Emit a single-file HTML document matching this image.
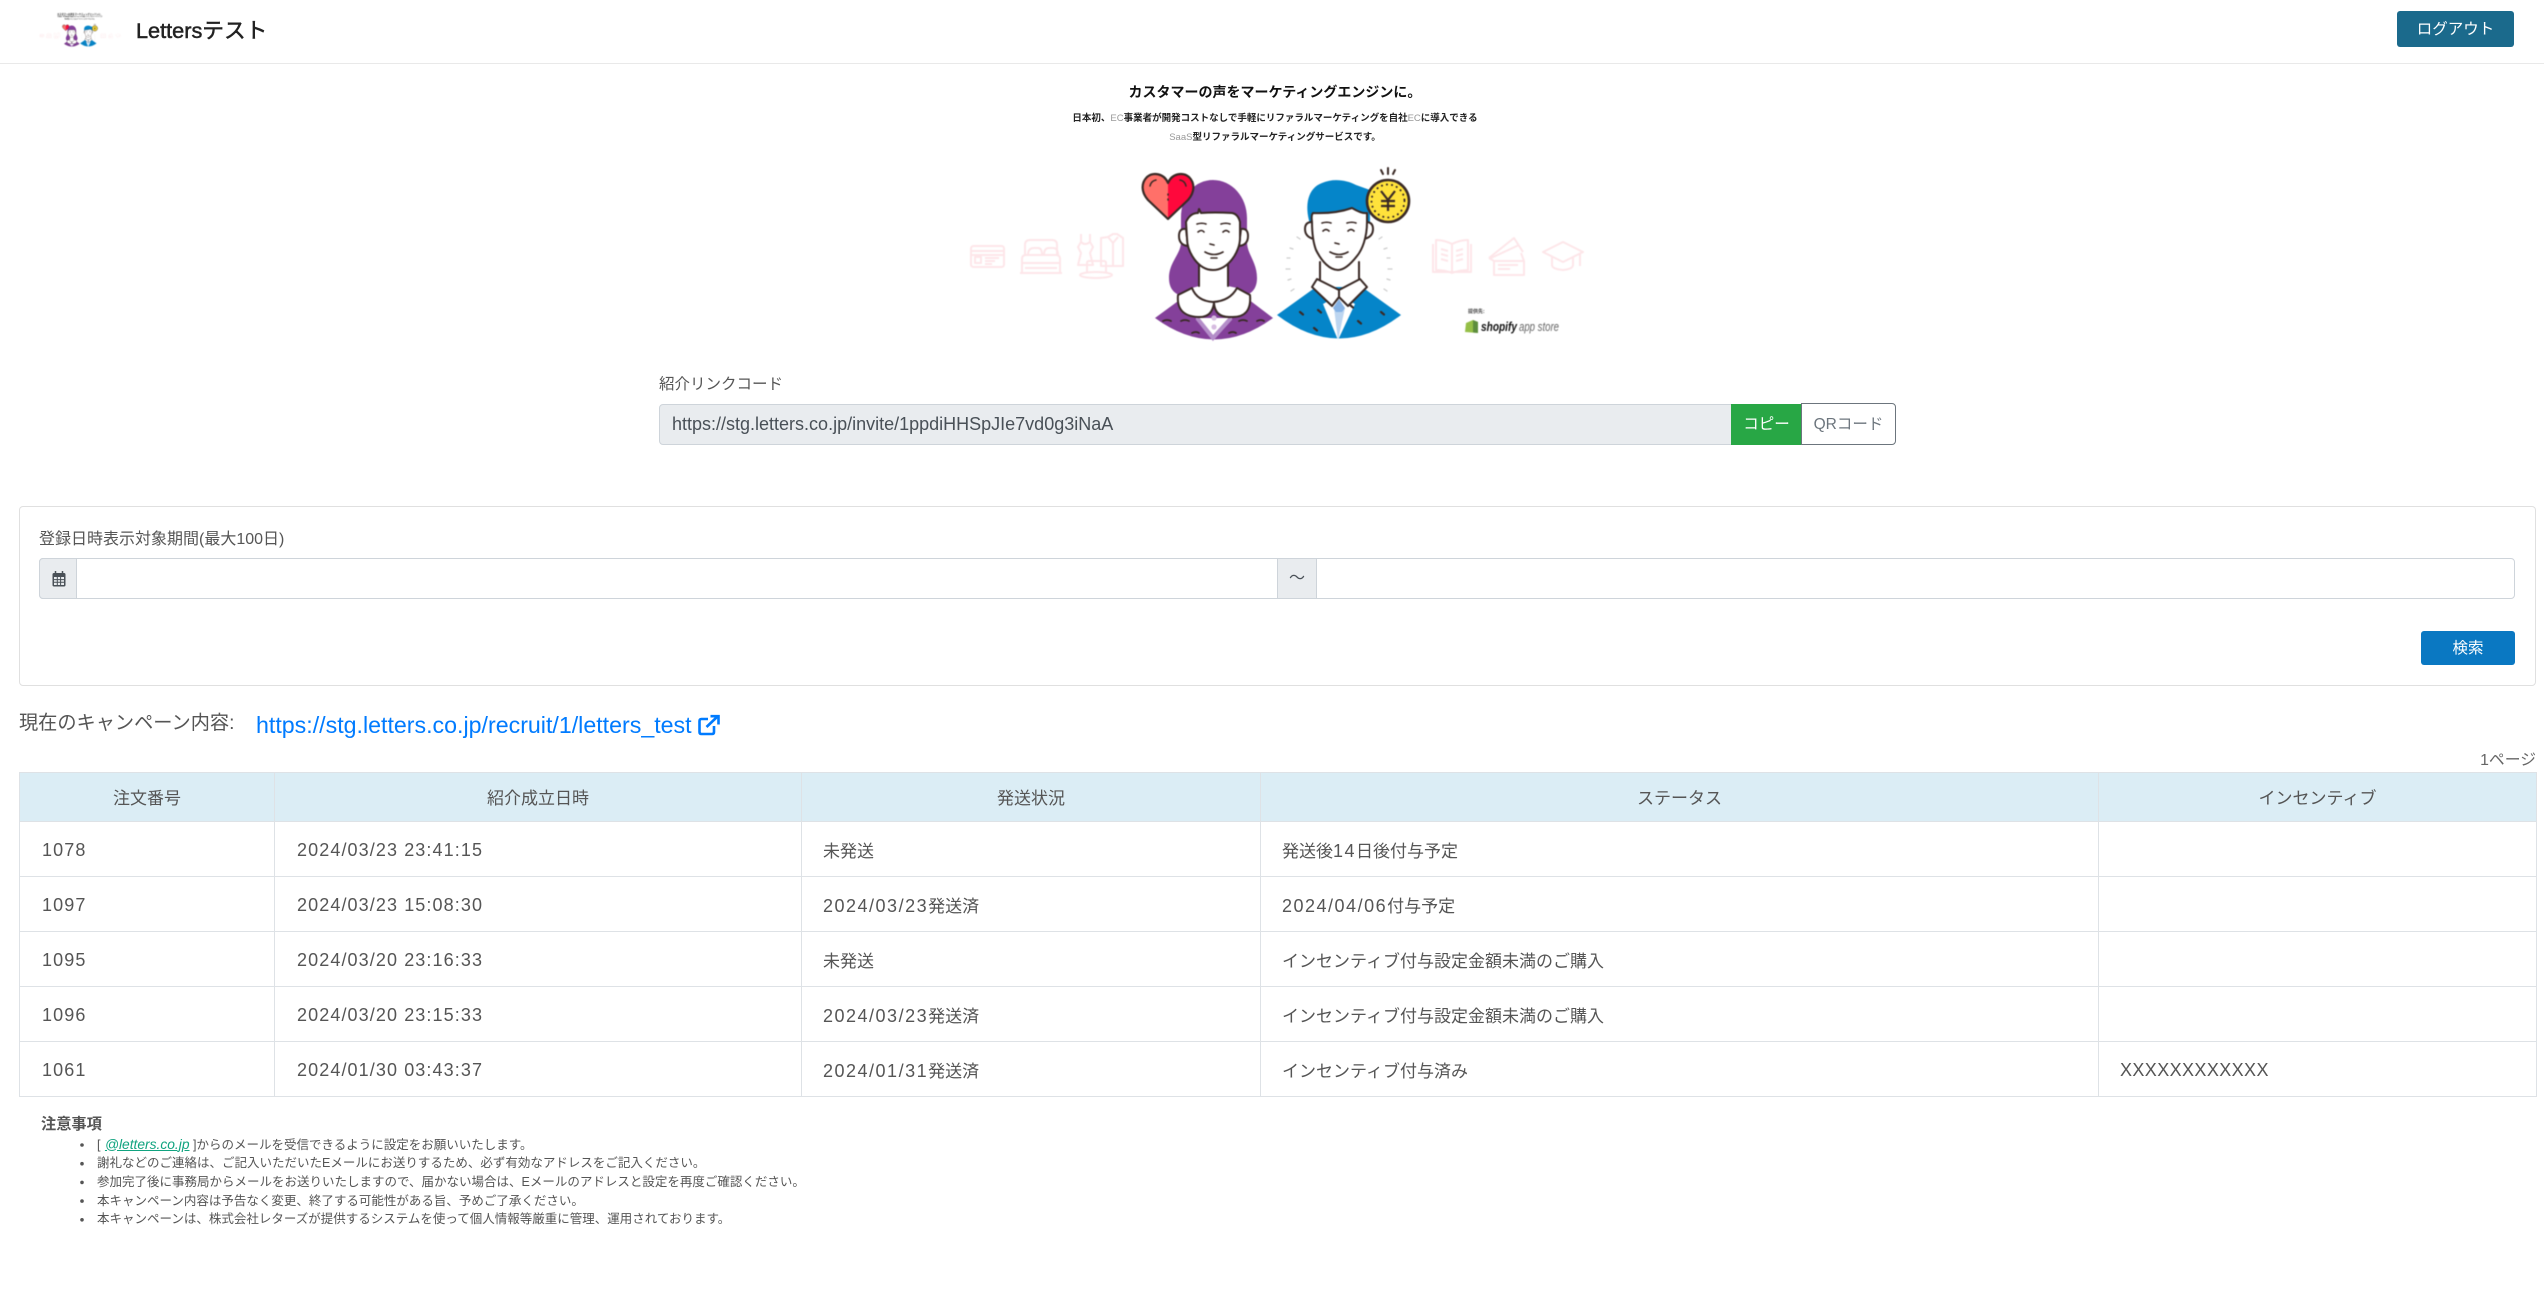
<!DOCTYPE html>
<html lang="ja"><head><meta charset="utf-8"><title>Lettersテスト</title>
<style>
*{box-sizing:border-box}
html,body{margin:0;padding:0;background:#fff}
body{width:2544px;height:1298px;position:relative;overflow:hidden;font-family:"Liberation Sans","Noto Sans CJK JP",sans-serif;color:#555}
.a{position:absolute;white-space:nowrap}
table{position:absolute;left:19px;top:772px;width:2517px;height:325px;border-collapse:collapse;table-layout:fixed;font-size:17px}
th,td{border:1px solid #dee2e6;padding:0 0 0 21px;color:#555;font-weight:400;text-align:left;white-space:nowrap}
th{background:#dbedf5;text-align:center;padding:0 0 2px;height:49px}
td{height:55px}
.d{font-size:18px;letter-spacing:1.1px;padding-top:2px;padding-left:22px}
.x{letter-spacing:.4px;padding-left:21px}
.e{font-size:18px;letter-spacing:1.5px}
ul{margin:0;padding:0;list-style:none}
</style></head><body>
<!-- header -->
<div class="a" style="left:0;top:63px;width:2544px;height:1px;background:#e9e9e9"></div>
<svg class="a" style="left:0;top:0;filter:blur(.4px)" width="140" height="60" viewBox="0 0 140 60">
<g transform="translate(80 13) scale(.1322) translate(-1276 -85)"><use href="#art"/></g>
<g font-size="2.2" fill="#222" text-anchor="middle" font-weight="700"><text x="80" y="15">カスタマーの声をマーケティングエンジンに。</text>
<text x="80" y="17" font-size="1.4">日本初、EC事業者が開発コストなしで手軽にリファラルマーケティング</text>
<text x="80" y="19.5" font-size="1.4">SaaS型リファラルマーケティングサービスです。</text></g>
</svg>
<div class="a" style="left:136px;top:17px;font-size:21.700px;line-height:28px;color:#222;-webkit-text-stroke:.5px #222">Lettersテスト</div>
<div class="a" style="left:2397px;top:11px;width:117px;height:36px;background:#1b6a8c;border-radius:3px;color:#fff;font-size:15.500px;line-height:38px;text-align:center">ログアウト</div>

<!-- hero -->
<div class="a" style="left:975px;width:600px;top:81px;text-align:center;font-size:14px;line-height:22px;font-weight:700;color:#111">カスタマーの声をマーケティングエンジンに。</div>
<div class="a" style="left:975px;width:600px;top:108.500px;text-align:center;font-size:9.500px;line-height:20px;font-weight:700;color:#222">日本初、<span style="color:#999;font-weight:400">EC</span>事業者が開発コストなしで手軽にリファラルマーケティングを自社<span style="color:#999;font-weight:400">EC</span>に導入できる</div>
<div class="a" style="left:975px;width:600px;top:127.500px;text-align:center;font-size:9.500px;line-height:20px;font-weight:700;color:#222"><span style="color:#999;font-weight:400">SaaS</span>型リファラルマーケティングサービスです。</div>

<svg class="a" style="left:0;top:0;filter:blur(.4px)" width="2544" height="400" viewBox="0 0 2544 400">
<defs><g id="art">
 <!-- pink icons -->
 <g fill="none" stroke="#fde6e9" stroke-width="2" stroke-linejoin="round">
  <rect x="971" y="246" width="33" height="21" rx="2.500"/><path d="M971 251h33M971 255h33"/><rect x="975" y="257" width="6" height="6"/><path d="M985 258h14M985 261h10M985 264h7"/>
  <path d="M1025 255v-10q0-5 5-5h22q5 0 5 5v10"/><path d="M1028 255q0-7 6-7h4q4 0 4 7M1044 255q0-7 5-7h4q5 0 5 7"/><path d="M1022 273v-14q0-4 4-4h30q4 0 4 4v14"/><path d="M1022 263h38M1020 273h42M1025 268h32"/>
  <path d="M1081 234v8l-3 5 3 6-3 12h15l-3-12 3-6-3-5v-8M1081 242q4 4 9 0"/>
  <path d="M1108 237l5-3h4l6 4v28h-22v-28zM1108 237l5 6 5-6M1113 243v23"/>
  <path d="M1087 272v-9q0-2 2-2h15q2 0 2 2v9"/><ellipse cx="1096" cy="275" rx="16" ry="3"/>
  <path d="M1452 244q-8-4-16-4v30q9 0 16 3 8-3 16-3v-30q-8 0-16 4zM1452 244v29M1433 244v28h38v-28"/><path d="M1441 249l7 2M1441 254l7 2M1441 259l7 2M1456 251l7-2M1456 256l7-2M1456 261l7-2"/>
  <rect x="1494" y="261" width="30" height="14"/><path d="M1489 258l5 3M1489 258l25-20 9 14M1491 258l28-13M1524 261l-3-8M1498 265h20M1498 269h12"/>
  <path d="M1543 252l20-10 20 10-20 10zM1552 257v8q0 4 11 5 10-1 10-5v-8M1580 254v12"/>
 </g>
 <!-- woman -->
 <path fill="#84409a" d="M1181 218C1181 195 1195 180 1213 180C1232 180 1247 197 1247 218V242C1247 254 1257 262 1257 278C1257 290 1250 296 1240 296H1186C1176 296 1169 290 1169 278C1169 262 1181 254 1181 242Z"/>
 <path fill="#84409a" d="M1155 318L1185 296H1244L1273 318Q1214 361 1155 318Z"/>
 <path fill="#fff" d="M1196 318L1214 339L1232 318Z"/><path fill="none" stroke="#b48dc9" stroke-width="4" d="M1197 318L1213 338L1231 318"/>
 <circle cx="1214" cy="318" r="2.600" fill="#d6bce0"/><circle cx="1214" cy="327" r="2.600" fill="#d6bce0"/>
 <g fill="none" stroke="#3a2a26" stroke-width="1.800" stroke-linecap="round">
  <path d="M1163 321q4-2 8 0M1181 321q4-2 8 0M1239 321q4-2 8 0M1257 321q4-2 7 0M1192 333q4-2 7 0M1229 333q4-2 7 0"/>
 </g>
 <g stroke="#3a2a26" stroke-width="2" fill="#fff" stroke-linejoin="round" stroke-linecap="round">
  <path d="M1186 229q-7-1-7 7 0 9 9 10z"/><path d="M1241 229q7-1 7 7 0 9-9 10z"/>
  <path d="M1199 258V286L1192 288Q1197 301 1213 302Q1230 301 1237 288L1228 286V258Z" stroke="none"/>
  <path d="M1199 262V286M1228 262V286" fill="none"/>
  <path d="M1186 222Q1190 213 1198 213L1199 209L1201 213Q1214 212 1232 213Q1238 214 1240 222V238C1240 252 1228 270 1213 270C1198 270 1187 252 1187 238Z"/>
  <path d="M1192 288Q1197 301 1213 302Q1230 301 1237 288L1250 295Q1252 318 1231 317Q1215 318 1214 303Q1212 318 1198 317Q1176 316 1178 295Z"/>
  <g fill="none" stroke-width="1.600">
   <path d="M1197 224q5-1.500 9 0M1221 224q5-1.500 9 0M1198 232q3.500-3 6 0M1223 232q3-3 6 0M1210 244l4 1M1205 252q9 5 18 0M1211 258h6"/>
  </g>
 </g>
 <!-- heart -->
 <path fill="#ff7069" d="M1168 219V183C1164 173 1152 172 1147 177C1141 183 1142 192 1147 199Z"/>
 <path fill="#ff083c" d="M1168 219V183C1172 173 1184 172 1189 177C1195 183 1194 192 1189 199Z"/>
 <path fill="none" stroke="#3a2a26" stroke-width="2.200" stroke-linejoin="round" d="M1168 219L1148 200C1141 192 1141 183 1147 177C1153 172 1164 173 1168 183C1172 173 1183 172 1189 177C1195 183 1195 192 1188 200Z"/>
 <path fill="none" stroke="#3a2a26" stroke-width="1.500" stroke-linecap="round" d="M1150 186q1-5 6-6M1186 186q-1-5-6-6M1168 194v1M1168 199v1"/>
 <!-- man -->
 <path fill="#0585c9" d="M1310 224C1304 205 1308 188 1322 183C1333 178 1347 180 1356 185L1370 190V224H1310Z"/>
 <path fill="#0585c9" d="M1277 315L1316 287H1362L1401 315Q1339 362 1277 315Z"/>
 <path fill="#fff" d="M1323 304L1338 340L1355 304L1339 295Z"/>
 <path fill="#bcd5f0" d="M1334 308L1338 340L1345 308Z"/><path fill="#86b3e6" d="M1333 308L1339 299L1345 308L1342 312H1336Z"/>
 <g stroke="#3a2a26" stroke-width="2" stroke-linecap="round" fill="#fff" stroke-linejoin="round">
  <path d="M1312 222q-7 0-7 7 0 8 9 10z"/><path d="M1366 222q7 0 7 7 0 8-9 10z"/>
  <path d="M1320 262V280H1359V262Z" stroke="none"/><path d="M1320 262V280M1359 262V280" fill="none"/>
  <path d="M1312 222Q1311 215 1313 213Q1335 214 1352 208Q1362 214 1367 213V222C1367 238 1362 250 1357 256C1350 265 1344 270 1338 270C1330 270 1322 262 1316 250C1313 242 1312 232 1312 222Z"/>
  <path d="M1317 279L1339 290L1360 279L1367 287L1348 306L1339 297L1332 306L1312 287Z"/>
  <path d="M1339 290V297" fill="none"/>
  <g fill="none" stroke-width="1.600"><path d="M1322 223q5-1.500 9 0M1347 223q5-1.500 9 0M1323 231q3-3 6 0M1348 231q3-3 6 0M1335 243l4 1M1330 252q9 5 18 0M1336 257h6"/></g>
  <path d="M1300 312l3 2.500M1318 310l3 2.500M1350 305l3 2.500M1381 312l3 2.500M1358 321l3 2.500M1314 328l3 2.500" fill="none" stroke-width="2.200"/>
 </g>
 <g fill="none" stroke="#ccc" stroke-width="1.200" stroke-linecap="round"><path d="M1297 237l3 2M1290 248l3 1M1287 258h3M1286 269h4M1288 280l3-1M1291 291l3-2M1382 237l-3 2M1387 248l-3 1M1390 258h-3M1392 269h-4M1390 280l-3-1M1387 291l-3-2"/></g>
 <circle cx="1388" cy="201" r="21" fill="#ffe23b" stroke="#3a2a26" stroke-width="2.600"/>
 <circle cx="1388" cy="201" r="16.500" fill="none" stroke="#3a2a26" stroke-width="2" stroke-dasharray=".1 5" stroke-linecap="round"/>
 <path fill="none" stroke="#3a2a26" stroke-width="2.200" d="M1381 191l7 9 7-9M1388 200v11M1381 201h14M1381 206h14"/>
 <path stroke="#3a2a26" stroke-width="2" stroke-linecap="round" d="M1381 170l2 4M1388 168v6M1395 170l-2 4"/>
</g></defs>
<use href="#art"/>
<!-- shopify -->
<path fill="#95bf47" d="M1466 323l7-3 5 2v11l-13-1z"/><path fill="#5e8e3e" d="M1473 320l5 2v11l-5-.5z"/>
<text x="1468" y="313" font-size="5" fill="#444" font-weight="700">提供先:</text>
<text x="1481" y="331" font-size="12.500" font-weight="700" font-style="italic" fill="#111" textLength="36" lengthAdjust="spacingAndGlyphs">shopify</text>
<text x="1519" y="331" font-size="12.500" font-style="italic" fill="#666" textLength="40" lengthAdjust="spacingAndGlyphs">app store</text>
</svg>

<!-- referral code -->
<div class="a" style="left:659px;top:373.500px;font-size:15.500px;line-height:22px">紹介リンクコード</div>
<div class="a" style="left:659px;top:404px;width:1073px;height:41px;background:#e9ecef;border:1px solid #ced4da;border-radius:4px 0 0 4px;font-size:18px;line-height:39px;padding-left:12px;color:#495057">https://stg.letters.co.jp/invite/1ppdiHHSpJIe7vd0g3iNaA</div>
<div class="a" style="left:1731px;top:404px;width:71px;height:41px;background:#28a745;color:#fff;font-size:15.500px;line-height:41px;text-align:center">コピー</div>
<div class="a" style="left:1801px;top:403px;width:95px;height:42px;border:1px solid #6c757d;border-radius:0 4px 4px 0;color:#6c757d;font-size:15.500px;line-height:42px;text-align:center">QRコード</div>

<!-- search card -->
<div class="a" style="left:19px;top:506px;width:2517px;height:180px;border:1px solid #e0e0e0;border-radius:4px"></div>
<div class="a" style="left:39px;top:528.500px;font-size:16px;line-height:22px">登録日時表示対象期間(最大100日)</div>
<div class="a" style="left:39px;top:558px;width:2476px;height:41px;border:1px solid #ced4da;border-radius:4px"></div>
<div class="a" style="left:39px;top:558px;width:38px;height:41px;background:#e9ecef;border:1px solid #ced4da;border-radius:4px 0 0 4px"></div>
<svg class="a" style="left:52px;top:571px" width="14" height="16" viewBox="0 0 14 16"><rect x=".5" y="2" width="13" height="13.500" rx="1.500" fill="#495057"/><rect x="2" y="6" width="10" height="8" fill="#e9ecef"/><path d="M5.300 6v8M8.600 6v8M2 8.600h10M2 11.300h10" stroke="#495057" stroke-width="1"/><path d="M3.500 0v3M10.500 0v3" stroke="#495057" stroke-width="1.500"/></svg>
<div class="a" style="left:1277px;top:558px;width:40px;height:41px;background:#e9ecef;border:1px solid #ced4da;font-size:16px;line-height:39px;text-align:center;color:#495057">〜</div>
<div class="a" style="left:2421px;top:631px;width:94px;height:34px;background:#0a78c2;border-radius:3px;color:#fff;font-size:15.500px;line-height:36px;text-align:center">検索</div>

<!-- campaign -->
<div class="a" style="left:19px;top:710px;font-size:19.200px;line-height:28px">現在のキャンペーン内容:</div>
<div class="a" style="left:256px;top:711px;font-size:23.200px;line-height:28px;color:#007bff">https://stg.letters.co.jp/recruit/1/letters_test</div>
<svg class="a" style="left:697px;top:714px" width="24" height="22" viewBox="0 0 24 22" fill="none" stroke="#007bff" stroke-width="2.600"><path d="M11 5H4.500Q2.500 5 2.500 7V18Q2.500 20 4.500 20H15Q17 20 17 18V12"/><path d="M9.500 13L20 3" /><path d="M13.500 2.200H21.500V10.500" /></svg>
<div class="a" style="right:8px;top:749.500px;font-size:15.800px;line-height:22px;color:#666">1ページ</div>

<table>
<colgroup><col style="width:255px"><col style="width:527px"><col style="width:459px"><col style="width:838px"><col style="width:438px"></colgroup>
<tr><th>注文番号</th><th>紹介成立日時</th><th>発送状況</th><th>ステータス</th><th>インセンティブ</th></tr>
<tr><td class="d">1078</td><td class="d">2024/03/23 23:41:15</td><td>未発送</td><td>発送後<span class="e">14</span>日後付与予定</td><td></td></tr>
<tr><td class="d">1097</td><td class="d">2024/03/23 15:08:30</td><td><span class="e">2024/03/23</span>発送済</td><td><span class="e">2024/04/06</span>付与予定</td><td></td></tr>
<tr><td class="d">1095</td><td class="d">2024/03/20 23:16:33</td><td>未発送</td><td>インセンティブ付与設定金額未満のご購入</td><td></td></tr>
<tr><td class="d">1096</td><td class="d">2024/03/20 23:15:33</td><td><span class="e">2024/03/23</span>発送済</td><td>インセンティブ付与設定金額未満のご購入</td><td></td></tr>
<tr><td class="d">1061</td><td class="d">2024/01/30 03:43:37</td><td><span class="e">2024/01/31</span>発送済</td><td>インセンティブ付与済み</td><td class="d x">XXXXXXXXXXXX</td></tr>
</table>

<!-- notes -->
<div class="a" style="left:41px;top:1113.500px;font-size:15.200px;line-height:22px;font-weight:700">注意事項</div>
<div class="a" style="left:97px;top:1135.500px;font-size:12.500px;line-height:18.700px">
<ul>
<li>[ <i style="color:#10a37f;text-decoration:underline;font-size:13.800px;margin-left:1px">@letters.co.jp</i> ]からのメールを受信できるように設定をお願いいたします。</li>
<li>謝礼などのご連絡は、ご記入いただいたEメールにお送りするため、必ず有効なアドレスをご記入ください。</li>
<li>参加完了後に事務局からメールをお送りいたしますので、届かない場合は、Eメールのアドレスと設定を再度ご確認ください。</li>
<li>本キャンペーン内容は予告なく変更、終了する可能性がある旨、予めご了承ください。</li>
<li>本キャンペーンは、株式会社レターズが提供するシステムを使って個人情報等厳重に管理、運用されております。</li>
</ul></div>
<svg class="a" style="left:79px;top:1135px" width="8" height="100" fill="#555"><circle cx="3" cy="10" r="1.800"/><circle cx="3" cy="28.700" r="1.800"/><circle cx="3" cy="47.400" r="1.800"/><circle cx="3" cy="66.100" r="1.800"/><circle cx="3" cy="84.800" r="1.800"/></svg>
</body></html>
